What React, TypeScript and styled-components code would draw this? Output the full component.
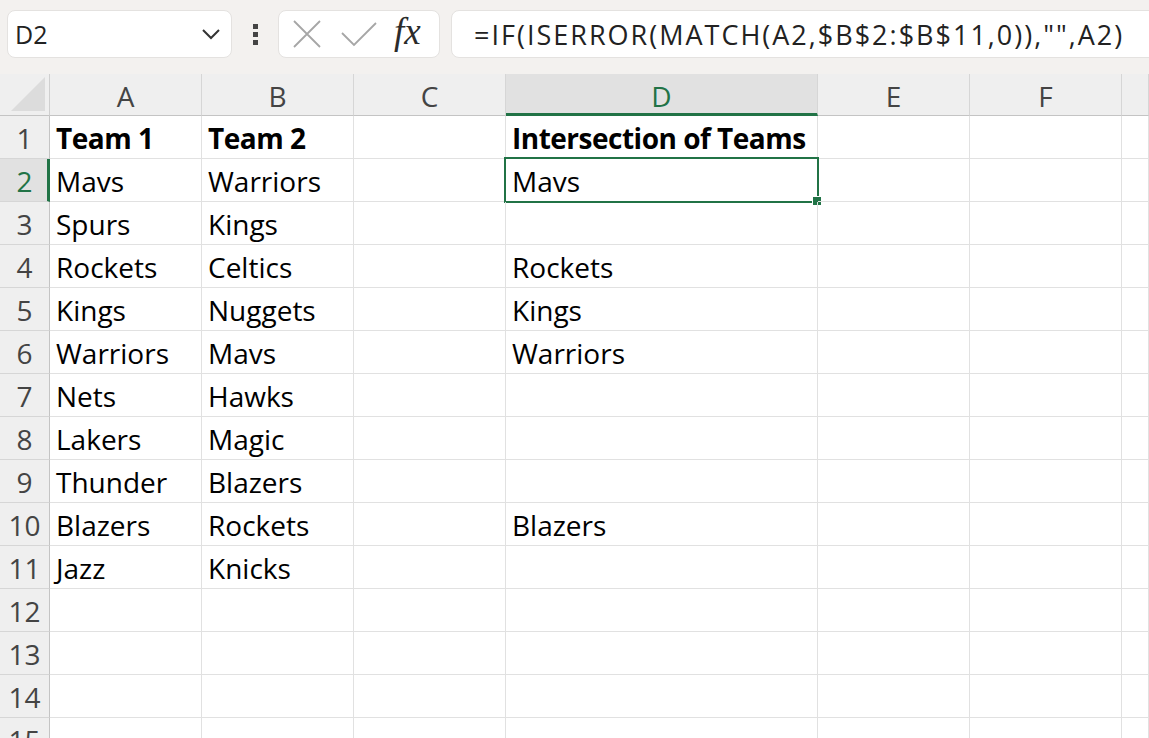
import styled, { createGlobalStyle, css } from 'styled-components';

const GlobalStyle = createGlobalStyle`
  html, body {
    margin: 0;
    padding: 0;
    background: #ffffff;
    overflow: hidden;
  }
  * {
    box-sizing: border-box;
  }
`;

const COLS = ['A', 'B', 'C', 'D', 'E', 'F', ''];
const SELECTED_COL = 3;
const SELECTED_ROW = 2;

const DATA: string[][] = [
  ['Team 1', 'Team 2', '', 'Intersection of Teams'],
  ['Mavs', 'Warriors', '', 'Mavs'],
  ['Spurs', 'Kings', '', ''],
  ['Rockets', 'Celtics', '', 'Rockets'],
  ['Kings', 'Nuggets', '', 'Kings'],
  ['Warriors', 'Mavs', '', 'Warriors'],
  ['Nets', 'Hawks', '', ''],
  ['Lakers', 'Magic', '', ''],
  ['Thunder', 'Blazers', '', ''],
  ['Blazers', 'Rockets', '', 'Blazers'],
  ['Jazz', 'Knicks', '', ''],
  [],
  [],
  [],
  [],
];

export default function App() {
  return (
    <Page>
      <GlobalStyle />
      <Toolbar>
        <NameBox>
          <span>D2</span>
          <svg width="22" height="14" viewBox="0 0 22 14">
            <path d="M3 3 L11 11 L19 3" fill="none" stroke="#333" strokeWidth="2" />
          </svg>
        </NameBox>
        <Dots>
          <i />
          <i />
          <i />
        </Dots>
        <FxBox>
          <svg width="30" height="30" viewBox="0 0 30 30">
            <path d="M2 2 L28 28 M28 2 L2 28" stroke="#a6a6a6" strokeWidth="1.8" fill="none" />
          </svg>
          <svg width="38" height="26" viewBox="0 0 38 26">
            <path d="M2 12 L14 24 L36 2" stroke="#a6a6a6" strokeWidth="1.8" fill="none" />
          </svg>
          <FxLabel>fx</FxLabel>
        </FxBox>
        <FormulaBox>=IF(ISERROR(MATCH(A2,$B$2:$B$11,0)),"",A2)</FormulaBox>
      </Toolbar>
      <Sheet>
        <Corner />
        {COLS.map((c, i) => (
          <ColHeader key={c + i} $selected={i === SELECTED_COL}>
            {c}
          </ColHeader>
        ))}
        {DATA.map((row, r) => (
          <Row key={r}>
            <RowHeader $selected={r + 1 === SELECTED_ROW}>{r + 1}</RowHeader>
            {COLS.map((_, c) => (
              <Cell
                key={c}
                $bold={r === 0}
                $active={r + 1 === SELECTED_ROW && c === SELECTED_COL}
              >
                {row[c] ?? ''}
              </Cell>
            ))}
          </Row>
        ))}
      </Sheet>
    </Page>
  );
}

const Page = styled.div`
  width: 1149px;
  height: 738px;
  overflow: hidden;
  background: #ffffff;
  font-family: "Open Sans", "Noto Sans", sans-serif;
  color: #000;
`;

const Toolbar = styled.div`
  height: 74px;
  background: #f3f1ef;
  display: flex;
  align-items: center;
  padding: 0 0 6px 7px;
  margin-right: -14px;
`;

const NameBox = styled.div`
  width: 225px;
  height: 48px;
  background: #fff;
  border: 1px solid #e4e2e0;
  border-radius: 8px;
  display: flex;
  align-items: center;
  justify-content: space-between;
  padding: 0 9px 0 7px;
  font-size: 25px;
  color: #222;
`;

const Dots = styled.div`
  width: 46px;
  display: flex;
  flex-direction: column;
  align-items: center;
  gap: 3px;

  i {
    width: 5px;
    height: 5px;
    background: #444;
  }
`;

const FxBox = styled.div`
  width: 162px;
  height: 48px;
  background: #fff;
  border: 1px solid #e4e2e0;
  border-radius: 8px;
  display: flex;
  align-items: center;
  gap: 18px;
  padding: 0 0 0 13px;
`;

const FxLabel = styled.span`
  font-family: "Liberation Serif", "DejaVu Serif", serif;
  font-style: italic;
  font-size: 37px;
  color: #2b2b2b;
  margin-top: -6px;
  margin-left: -2px;
`;

const FormulaBox = styled.div`
  flex: 1;
  margin-left: 11px;
  height: 48px;
  background: #fff;
  border: 1px solid #e4e2e0;
  border-radius: 8px;
  display: flex;
  align-items: center;
  padding-left: 22px;
  font-size: 27px;
  letter-spacing: 2px;
  color: #222;
  white-space: nowrap;
`;

const Sheet = styled.div`
  display: grid;
  grid-template-columns: 50px 152px 152px 152px 312px 152px 152px 1fr;
  grid-auto-rows: 43px;
  grid-template-rows: 42px;
`;

const Row = styled.div`
  display: contents;
`;

const headerBase = css`
  background: #efefef;
  color: #444;
  font-size: 28px;
  display: flex;
  align-items: center;
  justify-content: center;
`;

const Corner = styled.div`
  ${headerBase};
  border-right: 1px solid #cfcfcf;
  border-bottom: 1px solid #c4c4c4;
  position: relative;

  &::after {
    content: '';
    position: absolute;
    right: 4px;
    bottom: 4px;
    width: 0;
    height: 0;
    border-left: 34px solid transparent;
    border-bottom: 34px solid #dcdcdc;
  }
`;

const ColHeader = styled.div<{ $selected?: boolean }>`
  ${headerBase};
  padding-top: 2px;
  border-right: 1px solid #d6d6d6;
  border-bottom: 1px solid #c4c4c4;
  ${(p) =>
    p.$selected &&
    css`
      background: #e1e1e1;
      color: #217346;
      border-bottom: 3px solid #217346;
      padding-top: 4px;
    `}
`;

const RowHeader = styled.div<{ $selected?: boolean }>`
  ${headerBase};
  padding-top: 2px;
  border-right: 1px solid #c4c4c4;
  border-bottom: 1px solid #d6d6d6;
  ${(p) =>
    p.$selected &&
    css`
      background: #e1e1e1;
      color: #217346;
      border-right: 3px solid #217346;
      padding-left: 2px;
    `}
`;

const Cell = styled.div<{ $bold?: boolean; $active?: boolean }>`
  border-right: 1px solid #e1e1e1;
  border-bottom: 1px solid #e1e1e1;
  padding: 2px 0 0 6px;
  font-size: 28px;
  line-height: 40px;
  white-space: nowrap;
  position: relative;
  ${(p) =>
    p.$bold &&
    css`
      font-weight: 700;
      letter-spacing: -0.5px;
    `}
  ${(p) =>
    p.$active &&
    css`
      &::before {
        content: '';
        position: absolute;
        left: -2px;
        top: -2px;
        right: -2px;
        bottom: -2px;
        border: 2px solid #217346;
        pointer-events: none;
      }
      &::after {
        content: '';
        position: absolute;
        right: -5px;
        bottom: -5px;
        width: 8px;
        height: 8px;
        background: #217346;
        border: 1px solid #fff;
      }
    `}
`;
